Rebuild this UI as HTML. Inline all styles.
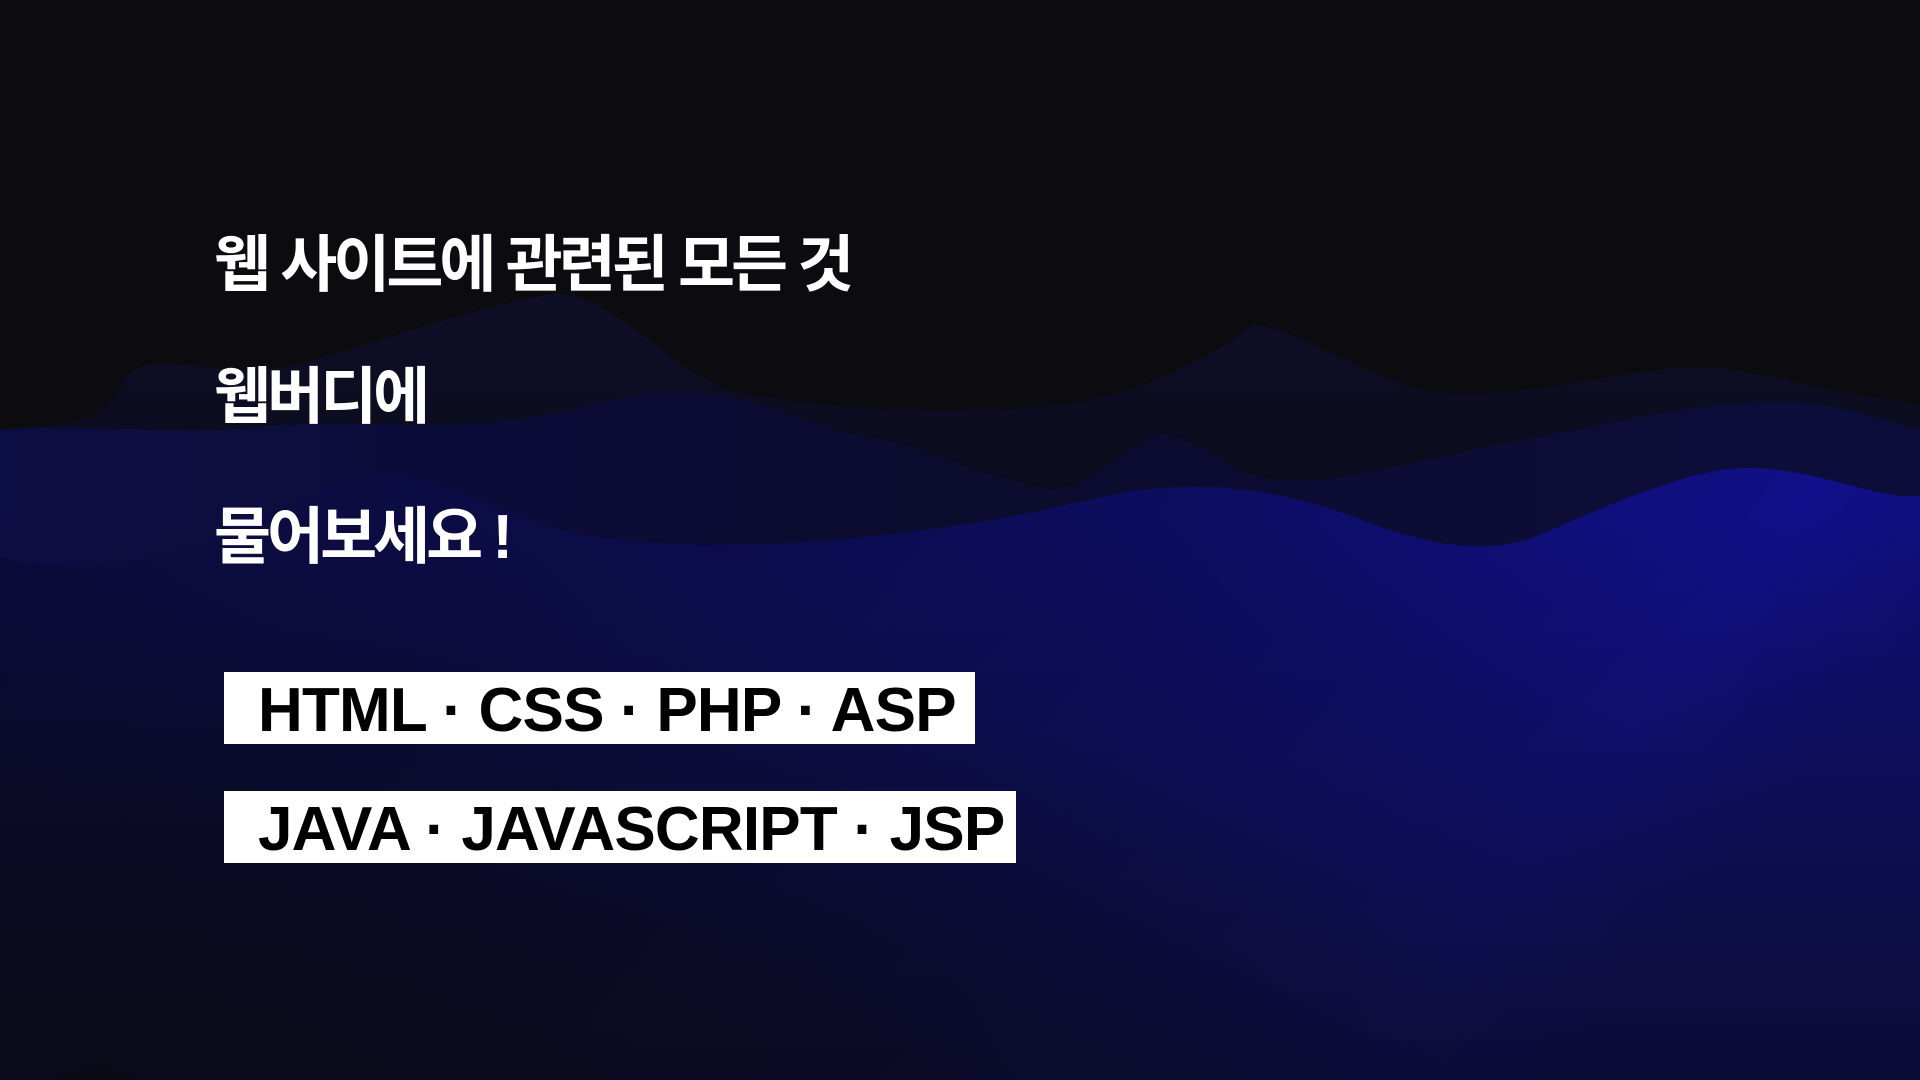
<!DOCTYPE html>
<html><head><meta charset="utf-8">
<style>
html,body{margin:0;padding:0}
body{width:1920px;height:1080px;overflow:hidden;background:#0b0b10;position:relative;font-family:"Liberation Sans","Noto Sans CJK KR",sans-serif}
svg.bg{position:absolute;left:0;top:0;width:1920px;height:1080px}
.h{position:absolute;left:214px;color:#fff;font-weight:700;font-size:62px;line-height:1;white-space:nowrap;font-family:"Liberation Sans","Noto Sans CJK KR",sans-serif;letter-spacing:-4px}
.box{position:absolute;left:224px;background:#fff;color:#000;font-weight:700;font-size:62px;line-height:72px;height:72px;padding-left:34px;padding-top:3px;box-sizing:border-box;white-space:nowrap;font-family:"Liberation Sans",sans-serif;letter-spacing:-0.8px}
</style></head><body>
<svg class="bg" viewBox="0 0 1568 882" preserveAspectRatio="none">
<defs>
<linearGradient id="l1" x1="0" y1="0" x2="0" y2="1"><stop offset="0" stop-color="#0e0e28"/><stop offset="0.35" stop-color="#0b0b18"/></linearGradient>
<linearGradient id="l2" x1="0" y1="0" x2="1" y2="0"><stop offset="0" stop-color="#0d0d45"/><stop offset="0.5" stop-color="#0c0c2e"/><stop offset="1" stop-color="#0d0d3c"/></linearGradient>
<linearGradient id="l3" x1="0" y1="0" x2="1" y2="0.25"><stop offset="0" stop-color="#0b0b3a"/><stop offset="0.3" stop-color="#0c0c48"/><stop offset="0.6" stop-color="#0d0d62"/><stop offset="0.9" stop-color="#10108a"/><stop offset="1" stop-color="#0f0f78"/></linearGradient>
<linearGradient id="fade" x1="0" y1="0" x2="0" y2="1"><stop offset="0" stop-color="#0b0b14" stop-opacity="0"/><stop offset="1" stop-color="#0b0b1a" stop-opacity="0.7"/></linearGradient>
<radialGradient id="bl" cx="0.05" cy="1" r="0.75"><stop offset="0" stop-color="#0a0a16" stop-opacity="0.95"/><stop offset="1" stop-color="#0a0a16" stop-opacity="0"/></radialGradient>
</defs>
<rect width="1568" height="882" fill="#0b0b10"/>
<path d="M0,350 C50,345 85,352 105,305 C130,285 180,310 230,300 C300,285 380,250 455,240 C510,245 540,300 600,320 C680,335 780,340 870,330 C940,320 990,290 1025,265 C1060,270 1100,300 1160,318 C1230,330 1300,305 1380,300 C1440,300 1480,320 1568,330 L1568,882 L0,882 Z" fill="url(#l1)"/>
<path d="M0,352 C60,345 120,355 200,350 C280,340 330,352 400,345 C470,340 520,315 565,320 C620,325 650,345 700,355 C760,365 800,390 860,400 C900,395 920,360 950,355 C985,360 1000,385 1040,392 C1100,395 1160,375 1240,360 C1320,345 1400,325 1470,328 C1510,332 1540,345 1568,350 L1568,882 L0,882 Z" fill="url(#l2)"/>
<path d="M0,455 C60,470 120,460 180,440 C230,420 270,388 315,388 C380,392 420,432 500,440 C600,452 700,440 760,432 C820,425 870,412 920,402 C990,392 1040,400 1100,420 C1150,440 1200,455 1250,440 C1320,410 1380,382 1430,382 C1490,384 1530,408 1568,405 L1568,882 L0,882 Z" fill="url(#l3)"/>
<rect x="0" y="420" width="1568" height="462" fill="url(#fade)"/>
<rect x="0" y="380" width="1568" height="502" fill="url(#bl)"/>
</svg>
<div class="h" style="top:235px">웹 사이트에 관련된 모든 것</div>
<div class="h" style="top:367px">웹버디에</div>
<div class="h" style="top:507px">물어보세요 !</div>
<div class="box" style="top:672px;width:751px">HTML · CSS · PHP · ASP</div>
<div class="box" style="top:791px;width:792px">JAVA · JAVASCRIPT · JSP</div>
</body></html>
